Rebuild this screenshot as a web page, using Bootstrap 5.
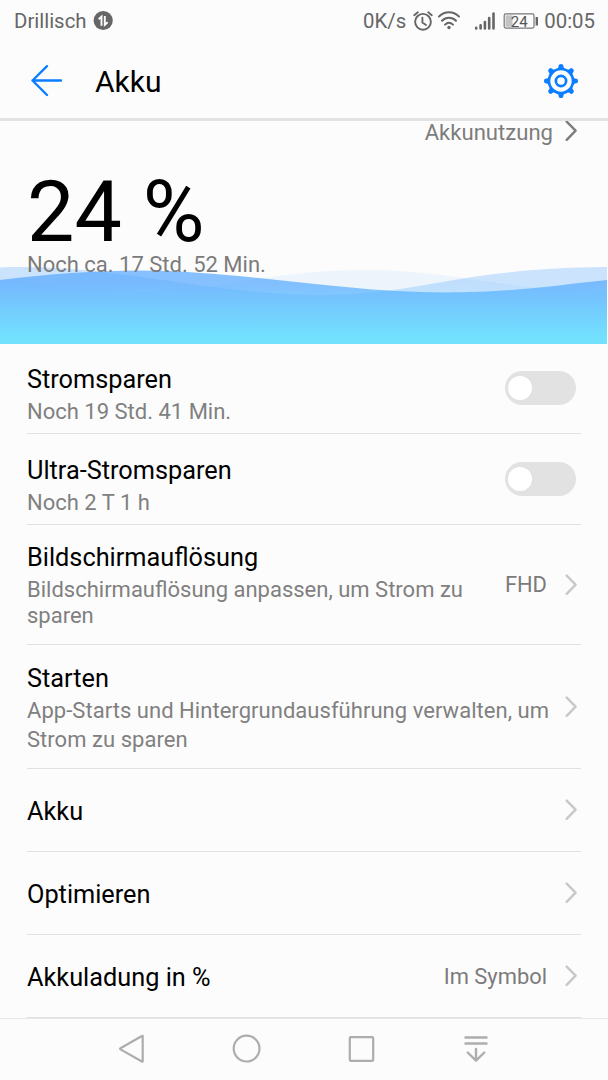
<!DOCTYPE html>
<html lang="de">
<head>
<meta charset="utf-8">
<meta name="viewport" content="width=device-width, initial-scale=1">
<title>Akku</title>
<link href="https://cdn.jsdelivr.net/npm/bootstrap@5.3.0/dist/css/bootstrap.min.css" rel="stylesheet">
<style>
  body { font-family: Roboto, "Noto Sans", sans-serif; background: #fcfcfc; color: #000; }
  svg { display: block; flex: none; overflow: visible; }
  .screen { height: 1080px; }
  .statusbar { height: 42px; padding: 0 13px 0 14px; font-size: 20.4px; line-height: 42px; color: #666; }
  .sb-data, .sb-alarm { margin-left: 7px; }
  .sb-wifi { margin-left: 5px; }
  .sb-signal { margin-left: 14px; }
  .sb-battery { margin-left: 8px; }
  .sb-clock { margin-left: 5px; }
  .appbar { height: 79px; padding: 1px 30px 0 31px; border-bottom: 3px solid #e2e2e2; }
  .appbar h1 { font-size: 30px; line-height: 36px; margin: 3px 0 0 33px; }
  .hero { height: 223px; }
  .usage { font-size: 22.1px; line-height: 20px; padding-right: 31px; gap: 12px; color: #7d7d7d; }
  .usage svg { margin-top: -1px; }
  .level { font-size: 84.4px; line-height: 76px; padding-left: 27px; margin-top: 33px; }
  .remaining { font-size: 22px; line-height: 28px; padding-left: 27px; margin-top: 0; color: #7b7b7b; }
  .settings { padding: 0 27px; }
  .entry { border-bottom: 1px solid #e0e0e0; height: 83px; padding-right: 4px; }
  .entry-text { padding-top: 27px; align-self: flex-start; }
  .entry-title { font-size: 25.3px; line-height: 32px; }
  .entry-note { font-size: 22px; line-height: 28px; margin-top: 2px; color: #808080; }
  .entry-value { font-size: 21.9px; line-height: 28px; color: #7b7b7b; margin-right: 18px; }
  .switch-off { width: 71px; height: 34px; padding: 5px 3px; background: #e2e2e2; margin-right: 1px; flex: none; }
  .switch-off span { width: 24px; height: 24px; background: #fff; }
  .e-power { height: 90px; } .e-ultra { height: 91px; } .e-res { height: 120px; } .e-start { height: 124px; }
  .e-power .switch-off { margin-bottom: 1px; }
  .e-power .entry-text { padding-top: 20px; } .e-ultra .entry-text { padding-top: 21px; }
  .e-res .entry-text { padding-top: 17px; } .e-start .entry-text { padding-top: 18px; }
  .e-res .entry-note { line-height: 26px; margin-top: 3px; }
  .e-start .entry-note { line-height: 29px; margin-top: 1px; letter-spacing: .04px; }
  .e-symbol .entry-value { padding-top: 2px; }
  .navkeys { height: 62px; border-top: 1px solid #e6e6e6; padding: 0 120px 2px 118px; color: #adadad; }
</style>
</head>
<body>
<svg width="0" height="0" class="position-absolute">
  <symbol id="chev" viewBox="0 0 12 22"><path d="M1.7 1.6 10.6 10.7 1.7 19.8" fill="none" stroke="currentColor" stroke-width="2.4" stroke-linecap="round" stroke-linejoin="round"/></symbol>
</svg>
<div class="screen d-flex flex-column overflow-hidden">
  <div class="statusbar d-flex align-items-center">
    <span>Drillisch</span>
    <svg class="sb-data" width="20" height="20" viewBox="0 0 20 20"><circle cx="9.2" cy="9.5" r="9.6" fill="#666"/><path d="M4.7 8.3 7.5 5.7v9M10.8 4.9v8.9l2.8-2.6" fill="none" stroke="#fcfcfc" stroke-width="1.9"/></svg>
    <span class="ms-auto">0K/s</span>
    <svg class="sb-alarm" width="20" height="20" viewBox="0 0 20 20" fill="none" stroke="#666" stroke-width="1.9" stroke-linecap="round"><circle cx="10" cy="10.8" r="7.9"/><path d="M9.4 6.6v5l3.6 2.4M1.2 4.2 4.8 1.3M15.2 1.3l3.6 2.9"/></svg>
    <svg class="sb-wifi" width="22" height="20" viewBox="0 0 22 20" fill="none" stroke="#666" stroke-width="2" stroke-linecap="round"><path d="M1 5.5C7-.1 15-.1 21 5.5M4 9.7c4-4 10-4 14 0M7 13.6c2.5-2.400 5.500-2.400 8 0"/><circle cx="11" cy="16.5" r="1.7" fill="#666" stroke="none"/></svg>
    <svg class="sb-signal" width="21" height="20" viewBox="0 0 21 20" stroke="#666" stroke-width="2.6" stroke-linecap="round"><path d="M2.200 17.500v-.8M6.600 17.500v-3.200M10.900 17.500V11M15.200 17.500V7M19.500 17.500V2.500"/></svg>
    <svg class="sb-battery" width="36" height="20" viewBox="0 0 36 20"><rect x="1.2" y="2.900" width="29.800" height="14.200" rx="1.500" fill="none" stroke="#777" stroke-width="1.200"/><path d="M2.500 4.300h7v11.500h-7z" fill="#c3c3c3"/><path d="M33.800 6v8.500" stroke="#666" stroke-width="2.400"/><text x="16.200" y="15.600" font-size="15" text-anchor="middle" fill="#555">24</text></svg>
    <span class="sb-clock">00:05</span>
  </div>

  <header class="appbar d-flex align-items-center">
    <svg width="31" height="31" viewBox="0 0 31 31" fill="none" stroke="#0a7eff" stroke-width="2.4" stroke-linecap="round" stroke-linejoin="round"><path d="M16 1.200 1.500 15.500 16 30M1.500 15.500h28.500"/></svg>
    <h1 class="fw-normal">Akku</h1>
    <svg class="ms-auto" width="34" height="34" viewBox="-17 -17 34 34" fill="none" stroke="#0a7eff">
      <circle r="12" stroke-width="2.6"/><circle r="5.100" stroke-width="2.700"/>
      <g fill="#0a7eff" stroke="none"><path id="tooth" d="M-4-12Q-2.400-13-2.300-15.400Q-2.200-17 0-17Q2.200-17 2.300-15.400Q2.400-13 4-12Z"/><use href="#tooth" transform="rotate(45)"/><use href="#tooth" transform="rotate(90)"/><use href="#tooth" transform="rotate(135)"/><use href="#tooth" transform="rotate(180)"/><use href="#tooth" transform="rotate(225)"/><use href="#tooth" transform="rotate(270)"/><use href="#tooth" transform="rotate(315)"/></g>
    </svg>
  </header>

  <section class="hero position-relative overflow-hidden">
    <svg class="position-absolute bottom-0 start-0" width="607" height="80" viewBox="0 264 607 80">
      <defs><linearGradient id="sea" gradientUnits="userSpaceOnUse" x1="0" y1="282" x2="0" y2="344"><stop stop-color="#58a9ff"/><stop offset=".9" stop-color="#54dbff"/></linearGradient></defs>
      <g fill="url(#sea)">
        <path opacity=".09" d="M0 279C60 287 100 291 150 291C220 291 270 270 365 270C450 270 510 291 607 291V344H0Z"/>
        <path opacity=".3" d="M0 267.500C110 263 210 295 320 295C420 295 460 268 607 267V344H0Z"/>
        <path opacity=".72" d="M0 280C50 274 95 270.500 140 270.500C240 270.500 340 292.500 445 292.500C510 292.500 550 286 607 280V344H0Z"/>
      </g>
    </svg>
    <div class="position-relative">
      <div class="usage d-flex justify-content-end align-items-center"><span>Akkunutzung</span><svg width="12" height="22"><use href="#chev"/></svg></div>
      <div class="level">24 %</div>
      <div class="remaining">Noch ca. 17 Std. 52 Min.</div>
    </div>
  </section>

  <main class="settings flex-grow-1 overflow-hidden">
    <div class="entry e-power d-flex align-items-center">
      <div class="entry-text flex-grow-1"><div class="entry-title">Stromsparen</div><div class="entry-note">Noch 19 Std. 41 Min.</div></div>
      <div class="switch-off rounded-pill"><span class="d-block rounded-circle"></span></div>
    </div>
    <div class="entry e-ultra d-flex align-items-center">
      <div class="entry-text flex-grow-1"><div class="entry-title">Ultra-Stromsparen</div><div class="entry-note">Noch 2 T 1 h</div></div>
      <div class="switch-off rounded-pill"><span class="d-block rounded-circle"></span></div>
    </div>
    <div class="entry e-res d-flex align-items-center">
      <div class="entry-text flex-grow-1"><div class="entry-title">Bildschirmauflösung</div><div class="entry-note">Bildschirmauflösung anpassen, um Strom zu sparen</div></div>
      <span class="entry-value">FHD</span><svg width="12" height="22" color="#c8c8c8"><use href="#chev"/></svg>
    </div>
    <div class="entry e-start d-flex align-items-center">
      <div class="entry-text flex-grow-1"><div class="entry-title">Starten</div><div class="entry-note">App-Starts und Hintergrundausführung verwalten, um Strom zu sparen</div></div>
      <svg class="ms-2" width="12" height="22" color="#c8c8c8"><use href="#chev"/></svg>
    </div>
    <div class="entry d-flex align-items-center">
      <div class="entry-text entry-title flex-grow-1">Akku</div>
      <svg width="12" height="22" color="#c8c8c8"><use href="#chev"/></svg>
    </div>
    <div class="entry d-flex align-items-center">
      <div class="entry-text entry-title flex-grow-1">Optimieren</div>
      <svg width="12" height="22" color="#c8c8c8"><use href="#chev"/></svg>
    </div>
    <div class="entry e-symbol d-flex align-items-center">
      <div class="entry-text entry-title flex-grow-1">Akkuladung in %</div>
      <span class="entry-value">Im Symbol</span><svg width="12" height="22" color="#c8c8c8"><use href="#chev"/></svg>
    </div>
  </main>

  <nav class="navkeys d-flex justify-content-between align-items-center">
    <svg width="26" height="30" viewBox="0 0 26 30" fill="none" stroke="currentColor" stroke-width="2.2" stroke-linejoin="round"><path d="M24.700 2v25.200Q24.700 28 23.900 27.500L2.500 15.400Q1.700 14.800 2.500 14.200L23.900 2Q24.700 1.500 24.700 2Z"/></svg>
    <svg width="28" height="28" viewBox="0 0 28 28" fill="none" stroke="currentColor" stroke-width="2.2"><circle cx="13.600" cy="13.600" r="12.900"/></svg>
    <svg width="26" height="26" viewBox="0 0 26 26" fill="none" stroke="currentColor" stroke-width="2.2"><rect x=".8" y="1.200" width="23.400" height="23.600" rx="1"/></svg>
    <svg width="24" height="26" viewBox="0 0 24 26" fill="none" stroke="currentColor" stroke-width="2.4" stroke-linecap="round" stroke-linejoin="round"><path d="M1.500 1.500h21M1.500 7.500h21M12 13v11.500M3.700 16.500 12 24.600l8.300-8.100"/></svg>
  </nav>
</div>
<script src="https://cdn.jsdelivr.net/npm/bootstrap@5.3.0/dist/js/bootstrap.bundle.min.js"></script>
</body>
</html>
